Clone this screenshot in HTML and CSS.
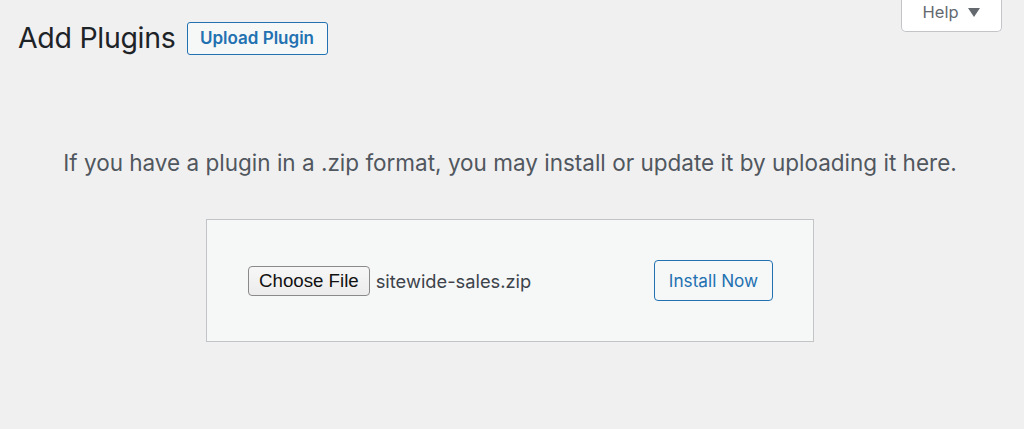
FILE: index.html
```html
<!DOCTYPE html>
<html>
<head>
<meta charset="utf-8">
<link rel="stylesheet" href="styles.css">
</head>
<body>
<div class="help-tab"><span>Help</span><span class="caret"></span></div>
<div class="wrap">
  <div class="header">
    <h1 class="title">Add Plugins</h1>
    <a class="upload-btn">Upload Plugin</a>
  </div>
  <p class="intro">If you have a plugin in a .zip format, you may install or update it by uploading it here.</p>
  <div class="upload-box">
    <div class="file-field">
      <span class="choose-btn">Choose File</span>
      <span class="file-name">sitewide-sales.zip</span>
    </div>
    <a class="install-btn">Install Now</a>
  </div>
</div>
</body>
</html>
```
FILE: styles.css
```css
* { box-sizing: border-box; }
html, body { margin: 0; padding: 0; }
body {
  background: #f0f0f1;
  font-family: Inter, "Noto Sans", sans-serif;
  color: #1d2327;
  width: 1024px;
  height: 429px;
  overflow: hidden;
  position: relative;
}
.help-tab {
  position: absolute;
  top: -1px;
  left: 901px;
  width: 101px;
  height: 33px;
  background: #fff;
  border: 1px solid #c3c4c7;
  border-top: none;
  border-radius: 0 0 5px 5px;
  display: flex;
  align-items: center;
  justify-content: center;
  gap: 10px;
  color: #646970;
  font-size: 16.5px;
  padding-bottom: 6px;
}
.caret {
  width: 0; height: 0;
  border-left: 6px solid transparent;
  border-right: 6px solid transparent;
  border-top: 9px solid #646970;
}
.wrap { width: 1020px; }
.header {
  display: flex;
  align-items: center;
  gap: 11px;
  padding: 21px 0 0 18px;
}
.title {
  margin: 0;
  font-size: 28.5px;
  line-height: 34px;
  font-weight: 400;
  letter-spacing: -0.3px;
  color: #1d2327;
}
.upload-btn {
  display: inline-flex;
  align-items: center;
  justify-content: center;
  width: 141px;
  height: 33px;
  border: 1px solid #2271b1;
  border-radius: 3px;
  background: #f6f7f7;
  color: #2271b1;
  font-size: 17px;
  font-weight: 600;
}
.intro {
  margin: 94px 0 0;
  text-align: center;
  font-size: 22.5px;
  color: #50575e;
}
.upload-box {
  width: 608px;
  height: 123px;
  margin: 43px auto 0;
  border: 1px solid #c3c4c7;
  background: #f6f7f7;
  display: flex;
  align-items: center;
  justify-content: space-between;
  padding: 0 40px 0 41px;
}
.file-field { display: flex; align-items: center; gap: 6px; }
.choose-btn {
  display: inline-flex;
  align-items: center;
  height: 30px;
  padding: 0 10px;
  border: 1px solid #8a8a8a;
  border-radius: 4px;
  background: linear-gradient(#f7f7f7, #ececec);
  color: #111;
  font-family: "Liberation Sans", Arial, sans-serif;
  font-size: 18.7px;
}
.file-name { color: #3c434a; font-size: 18.3px; }
.install-btn {
  display: inline-flex;
  align-items: center;
  justify-content: center;
  width: 119px;
  height: 41px;
  border: 1px solid #2271b1;
  border-radius: 4px;
  background: #f6f7f7;
  color: #2271b1;
  font-size: 17.2px;
}
```
